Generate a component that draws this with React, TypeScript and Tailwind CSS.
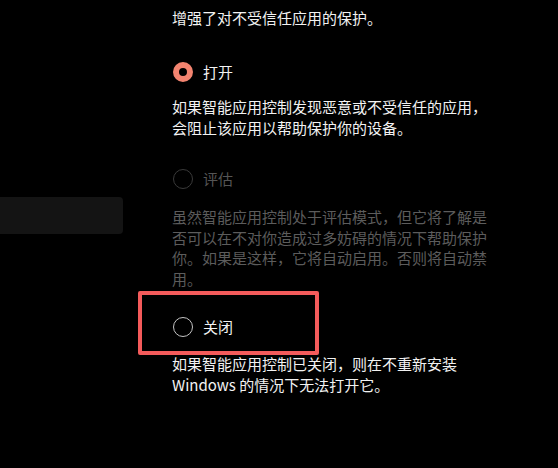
const font = { fontFamily: '"Noto Sans CJK SC", "Liberation Sans", sans-serif' };

function Radio({ state, label }: { state: 'on' | 'disabled' | 'off'; label: string }) {
  const ring =
    state === 'on'
      ? 'border-[6px] border-[#f38470]'
      : state === 'disabled'
        ? 'border border-[#3a3a3a]'
        : 'border border-[#c4c4c4]';
  const text = state === 'disabled' ? 'text-[#555555]' : 'text-[#f2f2f2]';
  return (
    <div className="flex h-5 items-center gap-[10px] pl-[1px]">
      <div className={`h-5 w-5 shrink-0 rounded-full bg-black ${ring}`} />
      <span className={`text-[15px] leading-5 ${text}`}>{label}</span>
    </div>
  );
}

export default function App() {
  return (
    <div className="relative flex h-[468px] w-[558px] overflow-hidden bg-black" style={font}>
      <div className="w-[172px] shrink-0 pt-[197px]">
        <div className="h-[37px] w-[123px] rounded-r-[4px] bg-[#141414]" />
      </div>

      <div className="flex flex-col pt-[7px] text-[15px]">
        <p className="leading-[21px] text-[#f2f2f2]">增强了对不受信任应用的保护。</p>

        <div className="mt-[34px]">
          <Radio state="on" label="打开" />
        </div>
        <p className="mt-[14px] leading-[21px] text-[#f2f2f2]">
          如果智能应用控制发现恶意或不受信任的应用，
          <br />
          会阻止该应用以帮助保护你的设备。
        </p>

        <div className="mt-[31px]">
          <Radio state="disabled" label="评估" />
        </div>
        <p className="mt-[18px] leading-[20.5px] text-[#5c5c5c]">
          虽然智能应用控制处于评估模式，但它将了解是
          <br />
          否可以在不对你造成过多妨碍的情况下帮助保护
          <br />
          你。如果是这样，它将自动启用。否则将自动禁
          <br />
          用。
        </p>

        <div className="mt-[28px]">
          <Radio state="off" label="关闭" />
        </div>
        <p className="mt-[16px] leading-[21px] text-[#f2f2f2]">
          如果智能应用控制已关闭，则在不重新安装
          <br />
          Windows 的情况下无法打开它。
        </p>
      </div>

      <div className="absolute left-[138px] top-[291px] h-[64px] w-[181px] rounded-[2px] border-4 border-[#f45b5b]" />
    </div>
  );
}
